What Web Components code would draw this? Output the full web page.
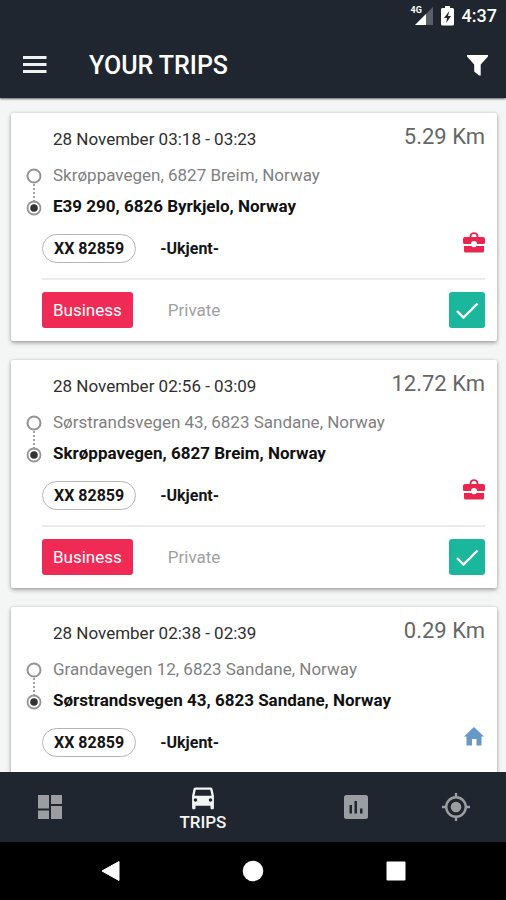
<!DOCTYPE html>
<html lang="en">
<head>
<meta charset="utf-8">
<meta name="viewport" content="width=device-width, initial-scale=1">
<title>Your trips</title>
<style>
  html, body { height: 100%; }
  body { margin: 0; background: #f4f5f5; font-family: Roboto, "Noto Sans", sans-serif; }
</style>
</head>
<body>
<trips-app></trips-app>

<template id="app-tpl">
  <style>
    :host { display: flex; flex-direction: column; height: 100vh; --bar: #1f262f; --accent: #ef2b55; --ok: #1ab79c; }
    main { flex: 1; min-height: 0; overflow: hidden; display: flex; flex-direction: column; gap: 19px; padding: 15px 9px 0 11px; background: #f4f5f5; }
    header { position: relative; background: var(--bar); box-shadow: 0 1px 2px rgba(0,0,0,.6); }
  </style>
  <header>
    <status-bar time="4:37"></status-bar>
    <app-bar>YOUR TRIPS</app-bar>
  </header>
  <main>
    <trip-card kind="business" plate="XX 82859">
      <span slot="date">28 November 03:18 - 03:23</span><span slot="distance">5.29 Km</span>
      <span slot="from">Skrøppavegen, 6827 Breim, Norway</span><span slot="to">E39 290, 6826 Byrkjelo, Norway</span>
    </trip-card>
    <trip-card kind="business" plate="XX 82859">
      <span slot="date">28 November 02:56 - 03:09</span><span slot="distance">12.72 Km</span>
      <span slot="from">Sørstrandsvegen 43, 6823 Sandane, Norway</span><span slot="to">Skrøppavegen, 6827 Breim, Norway</span>
    </trip-card>
    <trip-card kind="home" plate="XX 82859">
      <span slot="date">28 November 02:38 - 02:39</span><span slot="distance">0.29 Km</span>
      <span slot="from">Grandavegen 12, 6823 Sandane, Norway</span><span slot="to">Sørstrandsvegen 43, 6823 Sandane, Norway</span>
    </trip-card>
  </main>
  <tab-bar></tab-bar>
  <system-nav></system-nav>
</template>

<template id="status-tpl">
  <style>
    :host { display: flex; justify-content: flex-end; align-items: center; height: 32px; padding-right: 9px; color: #fff; font-size: 18px; font-weight: 500; line-height: 20px; }
    .net { position: relative; width: 24px; height: 20px; margin-right: 8px; }
    .net svg { display: block; }
    .net span { position: absolute; left: 2px; top: 0; font-size: 9px; line-height: 9px; font-weight: 700; }
    .bat { margin-right: 8px; }
  </style>
  <div class="net">
    <svg width="24" height="20" viewBox="0 0 24 20" aria-hidden="true"><path d="M24 1V19H6Z" fill="#5b6067"/><path d="M17 8V19H6Z" fill="#fff"/></svg>
    <span>4G</span>
  </div>
  <svg class="bat" width="13" height="20" viewBox="0 0 13 20" aria-hidden="true"><path fill="#fff" fill-rule="evenodd" d="M4 0h5v2h2.500q1.500 0 1.500 1.500v14.500q0 1.500-1.500 1.500h-10q-1.500 0-1.500-1.500v-14.500q0-1.500 1.500-1.500H4ZM8.300 5L3 12h3l-.8 5L10 10H7Z"/></svg>
  <span class="time"></span>
</template>

<template id="appbar-tpl">
  <style>
    :host { display: flex; align-items: center; height: 66px; padding: 0 18px 0 23px; color: #fff; }
    button { display: flex; padding: 0; border: 0; background: none; color: inherit; }
    h1 { flex: 1; margin: 2px 0 0 42px; font-size: 25px; line-height: 30px; font-weight: 500; }
  </style>
  <button aria-label="Menu"><svg width="24" height="20" viewBox="0 0 24 20"><path d="M0 1h23.500v3H0zM0 8h23.500v3H0zM0 15h23.500v3H0z" fill="#f1f0ec"/></svg></button>
  <h1><slot></slot></h1>
  <button aria-label="Filter"><svg width="21" height="21" viewBox="0 0 21 21"><path d="M0 0h21v1.500L13.700 9.500V20.500H12L7.200 16.500V9.500L0 1.500Z" fill="#fff"/></svg></button>
</template>

<template id="trip-tpl">
  <style>
    :host { display: block; flex: none; background: #fff; border-radius: 2px; box-shadow: 0 2px 4px rgba(0,0,0,.32), 0 0 3px rgba(0,0,0,.12); padding: 11px 12px 13px 14px; }
    .top { display: flex; justify-content: space-between; padding-left: 28px; }
    .date { font-size: 17px; line-height: 22px; margin-top: 4px; color: #2e2e2e; }
    .km { font-size: 22px; line-height: 26px; color: #666; }
    .route { display: grid; grid-template-columns: 18px 1fr; column-gap: 10px; margin-top: 10px; }
    .route svg { grid-row: 1 / 3; margin-top: 8px; }
    .route div { font-size: 17px; line-height: 31px; color: #808080; white-space: nowrap; }
    .route .to { font-weight: 700; color: #111; }
    .car { display: flex; align-items: center; margin: 12px 0 0 17px; height: 29px; font-size: 16px; font-weight: 700; line-height: 20px; color: #151515; }
    .plate { box-sizing: border-box; height: 29px; padding: 4px 11px; border: 1px solid #b5b5b5; border-radius: 15px; }
    .owner { flex: 1; margin-left: 24px; }
    .car svg { margin-bottom: 7px; }
    .actions { display: flex; align-items: center; margin: 15px 0 0 17px; padding-top: 12px; border-top: 2px solid #ececec; }
    :host([kind="home"]) .actions { visibility: hidden; }
    .actions button { height: 36px; padding: 0 11px; border: 0; border-radius: 3px; font: 17px/22px Roboto, "Noto Sans", sans-serif; }
    .biz { background: var(--accent); color: #fff; }
    .priv { margin-left: 24px; background: none; color: #a0a0a0; }
    label { display: grid; margin-left: auto; width: 36px; height: 36px; }
    label > * { grid-area: 1 / 1; }
    input { appearance: none; margin: 0; border-radius: 3px; background: var(--ok); }
    label svg { pointer-events: none; }
  </style>
  <div class="top"><div class="date"><slot name="date"></slot></div><div class="km"><slot name="distance"></slot></div></div>
  <div class="route">
    <svg width="18" height="48" viewBox="0 0 18 48" fill="none" aria-hidden="true">
      <circle cx="9" cy="8" r="6.500" stroke="#949494" stroke-width="2"/>
      <path d="M9 16V33" stroke="#858585" stroke-width="1.500" stroke-dasharray="2 2"/>
      <circle cx="9" cy="40" r="6.500" stroke="#949494" stroke-width="1.800"/><circle cx="9" cy="40" r="3.800" fill="#333"/>
    </svg>
    <div><slot name="from"></slot></div><div class="to"><slot name="to"></slot></div>
  </div>
  <div class="car"><span class="plate"></span><span class="owner">-Ukjent-</span><span class="kind"></span></div>
  <div class="actions">
    <button class="biz" aria-pressed="true">Business</button>
    <button class="priv" aria-pressed="false">Private</button>
    <label><input type="checkbox" checked aria-label="Approved"><svg width="36" height="36" viewBox="0 0 36 36" aria-hidden="true"><path d="M8 19L14.500 25.500L28.500 11.500" fill="none" stroke="#fff" stroke-width="2.400"/></svg></label>
  </div>
</template>

<template id="tabs-tpl">
  <style>
    :host { display: block; background: var(--bar); }
    nav { display: grid; grid-template-columns: 1fr 2.05fr 1fr 1fr; height: 70px; }
    a { display: flex; flex-direction: column; align-items: center; justify-content: center; text-decoration: none; color: #9b9da0; font-size: 17px; line-height: 22px; font-weight: 500; }
    a.on { color: #f4f4f4; padding-top: 2px; }
    svg { display: block; }
  </style>
  <nav>
    <a href="#dashboard" aria-label="Dashboard"><svg width="24" height="24" viewBox="0 0 24 24" fill="currentColor"><path d="M0 0h11v13.500H0zM13 0h11v9H13zM0 15.500h11V24H0zM13 11h11v13H13z"/></svg></a>
    <a href="#trips" class="on" aria-current="page"><svg width="30" height="28" viewBox="1 2 22 20" fill="currentColor"><path d="M18.920 6.010C18.720 5.420 18.160 5 17.500 5h-11c-.66 0-1.210.42-1.420 1.010L4 11v9c0 .55.45 1 1 1h.5c.55 0 1-.45 1-1v-1.500h11V20c0 .55.450 1 1 1h.5c.55 0 1-.45 1-1v-9zM6.500 15.500a1.300 1.300 0 1 1 0-2.600 1.300 1.300 0 0 1 0 2.600m11 0a1.300 1.300 0 1 1 0-2.600 1.300 1.300 0 0 1 0 2.600M5.700 11l1-4.300h10.600l1 4.300z"/></svg>TRIPS</a>
    <a href="#stats" aria-label="Statistics"><svg width="24" height="24" viewBox="0 0 24 24"><rect width="24" height="24" rx="2.500" fill="currentColor"/><path d="M5.500 10H8v8.500H5.500zM10.500 6H13v12.500h-2.500zM16 13.500h2.500v5H16z" fill="#1f262f"/></svg></a>
    <a href="#locate" aria-label="Location"><svg width="28" height="28" viewBox="0 0 28 28" fill="none" stroke="currentColor"><circle cx="14" cy="14" r="9.800" stroke-width="2.400"/><circle cx="14" cy="14" r="5.300" fill="currentColor" stroke="none"/><path d="M14 0v4M14 24v4M0 14h4M24 14h4" stroke-width="2.400"/></svg></a>
  </nav>
</template>

<template id="sys-tpl">
  <style>
    :host { display: flex; justify-content: center; align-items: center; gap: 121px; height: 58px; background: #000; }
    button { display: flex; padding: 0; border: 0; background: none; color: #fff; }
  </style>
  <button aria-label="Back"><svg width="22" height="22" viewBox="0 0 22 22"><path d="M20 1.500V20.500L3 11Z" fill="#fff" stroke="#fff" stroke-linejoin="round"/></svg></button>
  <button aria-label="Home"><svg width="22" height="22" viewBox="0 0 22 22"><circle cx="11" cy="11" r="10.300" fill="#fff"/></svg></button>
  <button aria-label="Recent apps"><svg width="22" height="22" viewBox="0 0 22 22"><rect x="1.500" y="1.500" width="19" height="19" rx="1" fill="#fff"/></svg></button>
</template>

<script>
  const kindIcons = {
    business: '<svg width="22" height="21" viewBox="0 0 22 21" role="img" aria-label="Business trip"><path d="M7.500 6V4Q8 1.200 11 1.200T14.500 4V6" fill="none" stroke="#e9264f" stroke-width="1.800"/><path d="M2 5h18q2 0 2 2v3.500q0 1.500-1.500 1.500H14a3 3 0 0 0-6 0H1.500Q0 12 0 10.500V7q0-2 2-2ZM1 14h7.500a3 3 0 0 0 5 0H21v5q0 1.500-1.500 1.500h-17Q1 20.500 1 19Z" fill="#e9264f"/></svg>',
    home: '<svg width="22" height="21" viewBox="0 0 22 21" role="img" aria-label="Private trip"><path d="M11 1L21 10.500H18.500V19.500H13.500V13H9V19.500H3.500V10.500H1Z" fill="#6699c7"/></svg>'
  };
  class Base extends HTMLElement {
    constructor() {
      super();
      this.attachShadow({ mode: 'open' }).append(document.getElementById(this.constructor.tpl).content.cloneNode(true));
    }
    $(sel) { return this.shadowRoot.querySelector(sel); }
  }
  customElements.define('status-bar', class extends Base {
    static tpl = 'status-tpl';
    connectedCallback() { this.$('.time').textContent = this.getAttribute('time'); }
  });
  customElements.define('app-bar', class extends Base { static tpl = 'appbar-tpl'; });
  customElements.define('trip-card', class extends Base {
    static tpl = 'trip-tpl';
    connectedCallback() {
      this.$('.plate').textContent = this.getAttribute('plate');
      this.$('.kind').innerHTML = kindIcons[this.getAttribute('kind')];
    }
  });
  customElements.define('tab-bar', class extends Base { static tpl = 'tabs-tpl'; });
  customElements.define('system-nav', class extends Base { static tpl = 'sys-tpl'; });
  customElements.define('trips-app', class extends Base { static tpl = 'app-tpl'; });
</script>
</body>
</html>
